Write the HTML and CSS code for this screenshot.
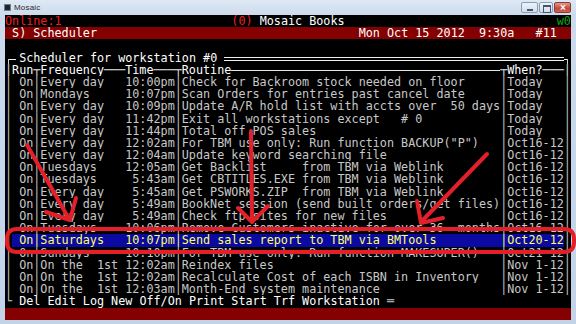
FILE: index.html
```html
<!DOCTYPE html>
<html lang="en">
<head>
    <meta charset="UTF-8">
    <title>Mosaic</title>
    <link rel="stylesheet" href="styles.css">
</head>
<body>
    <div class="window">
        <div class="titlebar">
            <span class="app-icon"></span>
            <span class="app-name">Mosaic</span>
            <div class="controls">
                <span class="ctl min"></span>
                <span class="ctl max"></span>
                <span class="ctl close"></span>
            </div>
        </div>

        <div class="console">
            <div class="line status"><span class="hot">Online:1</span><span><span class="hot">(0)</span><span class="hi"> Mosaic Books</span></span><span></span><span class="ok">w0</span></div>
            <div class="line menu"><span> S) Scheduler</span><span>Mon Oct 15 2012  9:30a   #11</span></div>
            <div class="line"></div>
            <div class="line title"><span class="corner-left"></span><span class="hi">Scheduler for workstation #0</span><span class="rule"></span><span class="corner-right"></span></div>
            <div class="line item head"><span>│</span><span class="hi">Run</span><span>┬</span><span><span class="hi">Frequency</span>───</span><span><span class="hi">Time</span>───</span><span>┬</span><span class="fill"><span class="hi">Routine</span><span class="dash"></span></span><span>┬</span><span><span class="hi">When?</span>───</span><span>│</span></div>
            <div class="line item"><span>│</span><span> On</span><span>│</span><span>Every day</span><span class="time">10:00pm</span><span>│</span><span>Check for Backroom stock needed on floor</span><span>│</span><span>Today</span><span>│</span></div>
            <div class="line item"><span>│</span><span> On</span><span>│</span><span>Mondays</span><span class="time">10:07pm</span><span>│</span><span>Scan Orders for entries past cancel date</span><span>│</span><span>Today</span><span>│</span></div>
            <div class="line item"><span>│</span><span> On</span><span>│</span><span>Every day</span><span class="time">10:09pm</span><span>│</span><span>Update A/R hold list with accts over  50 days</span><span>│</span><span>Today</span><span>│</span></div>
            <div class="line item"><span>│</span><span> On</span><span>│</span><span>Every day</span><span class="time">11:42pm</span><span>│</span><span>Exit all workstations except   # 0</span><span>│</span><span>Today</span><span>│</span></div>
            <div class="line item"><span>│</span><span> On</span><span>│</span><span>Every day</span><span class="time">11:44pm</span><span>│</span><span>Total off POS sales</span><span>│</span><span>Today</span><span>│</span></div>
            <div class="line item"><span>│</span><span> On</span><span>│</span><span>Every day</span><span class="time">12:02am</span><span>│</span><span>For TBM use only: Run function BACKUP("P")</span><span>│</span><span>Oct16-12</span><span>│</span></div>
            <div class="line item"><span>│</span><span> On</span><span>│</span><span>Every day</span><span class="time">12:04am</span><span>│</span><span>Update keyword searching file</span><span>│</span><span>Oct16-12</span><span>│</span></div>
            <div class="line item"><span>│</span><span> On</span><span>│</span><span>Tuesdays</span><span class="time">12:05am</span><span>│</span><span>Get Backlist     from TBM via Weblink</span><span>│</span><span>Oct16-12</span><span>│</span></div>
            <div class="line item"><span>│</span><span> On</span><span>│</span><span>Tuesdays</span><span class="time">5:43am</span><span>│</span><span>Get CBTITLES.EXE from TBM via Weblink</span><span>│</span><span>Oct16-12</span><span>│</span></div>
            <div class="line item"><span>│</span><span> On</span><span>│</span><span>Every day</span><span class="time">5:45am</span><span>│</span><span>Get PSWORKS.ZIP  from TBM via Weblink</span><span>│</span><span>Oct16-12</span><span>│</span></div>
            <div class="line item"><span>│</span><span> On</span><span>│</span><span>Every day</span><span class="time">5:49am</span><span>│</span><span>BookNet session (send built orders/get files)</span><span>│</span><span>Oct16-12</span><span>│</span></div>
            <div class="line item"><span>│</span><span> On</span><span>│</span><span>Every day</span><span class="time">5:49am</span><span>│</span><span>Check ftp sites for new files</span><span>│</span><span>Oct16-12</span><span>│</span></div>
            <div class="line item"><span>│</span><span> On</span><span>│</span><span>Tuesdays</span><span class="time">10:06pm</span><span>│</span><span>Remove Customers inactive for over 36  months</span><span>│</span><span>Oct16-12</span><span>│</span></div>
            <div class="line item sel"><span>│</span><span> On</span><span>│</span><span>Saturdays</span><span class="time">10:07pm</span><span>│</span><span>Send sales report to TBM via BMTools</span><span>│</span><span>Oct20-12</span><span>│</span></div>
            <div class="line item"><span>│</span><span> On</span><span>│</span><span>Sundays</span><span class="time">10:10pm</span><span>│</span><span>For TBM use only: Run function MAKESUPER()</span><span>│</span><span>Oct21-12</span><span>│</span></div>
            <div class="line item"><span>│</span><span> On</span><span>│</span><span>On the  1st</span><span class="time">12:02am</span><span>│</span><span>Reindex files</span><span>│</span><span>Nov 1-12</span><span>│</span></div>
            <div class="line item"><span>│</span><span> On</span><span>│</span><span>On the  1st</span><span class="time">12:02am</span><span>│</span><span>Recalculate Cost of each ISBN in Inventory</span><span>│</span><span>Nov 1-12</span><span>│</span></div>
            <div class="line item"><span>│</span><span> On</span><span>│</span><span>On the  1st</span><span class="time">12:03am</span><span>│</span><span>Month-End system maintenance</span><span>│</span><span>Nov 1-12</span><span>│</span></div>
            <div class="line keys"><span>└</span><span class="hi"> Del Edit Log New Off/On Print Start Trf Workstation </span><span>═</span></div>
            <div class="line menu"></div>
        </div>

        <!-- red marker drawn over the screenshot -->
        <svg class="marks" viewBox="0 0 576 324" width="576" height="324">
            <g fill="none" stroke="#e3202a" stroke-width="4" stroke-linecap="round" stroke-linejoin="round">
                <path d="M17 229 H564 Q574 229 574 239 V242 Q574 252 564 252 H17 Q7 252 7 242 V239 Q7 229 17 229 Z"/>
                <path d="M27 145 L69 219"/>
                <path d="M46 212 L70 220 L76 198"/>
                <path d="M251 131 L252 221"/>
                <path d="M238 208 L252 222 L268 206"/>
                <path d="M487 154 L421 222"/>
                <path d="M417 201 L421 223 L443 218"/>
            </g>
        </svg>
    </div>
</body>
</html>
```

FILE: styles.css
```css
* {margin: 0; padding: 0; box-sizing: border-box;}
body {width: 576px; height: 324px; overflow: hidden; background-color: #c4d5ea;}

.window {position: relative; width: 576px; height: 324px; padding: 0 4.6px 4px 5px; display: flex; flex-direction: column; background: linear-gradient(#dfe9f5, #cbdaed 15px, #c2d3e8);}

/* title bar */
.titlebar {height: 15px; display: flex; align-items: center; gap: 3px; font-family: 'Liberation Sans', sans-serif; font-size: 8px; color: #2a2a2a;}
.titlebar .app-icon {width: 7px; height: 7px; margin-left: -1px; background-color: #20242c; border: 1px solid #6b7f99;}
.titlebar .app-name {letter-spacing: 0.2px;}
.titlebar .controls {margin-left: auto; align-self: flex-start; margin-top: 2px; display: flex; gap: 1px;}
.titlebar .ctl {position: relative; height: 11px; border: 1px solid #8a9db6; border-radius: 2px; background: linear-gradient(#eef3f9, #d3deeb);}
.titlebar .ctl.min {width: 17px;}
.titlebar .ctl.max {width: 14px;}
.titlebar .ctl.close {width: 17px; border-color: #8c3a32; background: linear-gradient(#e19a8e, #c4473a 60%, #d2644f);}
.titlebar .ctl.min::after {content: ''; position: absolute; left: 5px; top: 6px; width: 6px; height: 2px; background-color: #44546a;}
.titlebar .ctl.max::after {content: ''; position: absolute; left: 3px; top: 2px; width: 6px; height: 5px; border: 1px solid #44546a; border-top-width: 2px;}
.titlebar .ctl.close::after {content: '\00d7'; position: absolute; inset: 0; display: flex; align-items: center; justify-content: center; color: #ffffff; font-size: 10px; font-weight: 700; line-height: 1;}

/* terminal */
.console {flex: 1; background-color: #000000; color: #c8c8c8; font-family: 'DejaVu Sans Mono', monospace; font-size: 11.76px; line-height: 12.2px; overflow: hidden;}
.console .line {height: 12.2px; white-space: pre; overflow: hidden;}
.console .hot {color: #f01e1e;}
.console .hi {color: #ffffff;}
.console .ok {color: #10a418;}
.console .fill {display: flex; align-items: center; overflow: hidden;}
.console .fill .dash {flex: 1; height: 1px; margin-top: 1px; background-color: #e6e6e6;}

.console .status {display: grid; grid-template-columns: 32ch 16ch 30ch 2ch;}
.console .menu {display: grid; grid-template-columns: 50ch 30ch; background-color: #850000; color: #ffffff;}

/* window frame line: ╒ title ═══ ╕ drawn with borders */
.console .title {display: grid; grid-template-columns: 2ch 28ch 1ch 48ch 1ch; grid-template-rows: 12.2px;}
.console .title .corner-left {grid-column: 1; position: relative;}
.console .title .hi {grid-column: 2;}
.console .title .rule {grid-column: 4; align-self: center; height: 4px; margin-top: 3px; border-top: 1px solid #f0f0f0; border-bottom: 1px solid #f0f0f0;}
.console .title .corner-right {grid-column: 5; position: relative;}
.console .title .corner-left::before {content: ''; position: absolute; left: 3px; right: 3px; top: 7px; height: 4px; border-top: 1px solid #f0f0f0; border-bottom: 1px solid #f0f0f0;}
.console .title .corner-left::after {content: ''; position: absolute; left: 3px; top: 7px; bottom: -1px; width: 1px; background-color: #d0d0d0;}
.console .title .corner-right::before {content: ''; position: absolute; left: 0; right: 3px; top: 7px; height: 4px; border-top: 1px solid #f0f0f0; border-bottom: 1px solid #f0f0f0;}
.console .title .corner-right::after {content: ''; position: absolute; left: 3px; top: 7px; bottom: -1px; width: 1px; background-color: #d0d0d0;}

.console .item {display: grid; grid-template-columns: 1ch 3ch 1ch 12ch 7ch 1ch 45ch 1ch 8ch 1ch;}
.console .item.head {color: #e6e6e6;}
.console .item .time {text-align: right;}
.console .item.sel > span {background-color: #0a0aa2; color: #ffff5c;}
.console .item.sel > span:first-child,
.console .item.sel > span:last-child {background-color: transparent; color: #c8c8c8;}
.console .keys {display: grid; grid-template-columns: 1ch 53ch 1ch;}

/* annotation layer */
.marks {position: absolute; left: 0; top: 0; pointer-events: none;}
```
